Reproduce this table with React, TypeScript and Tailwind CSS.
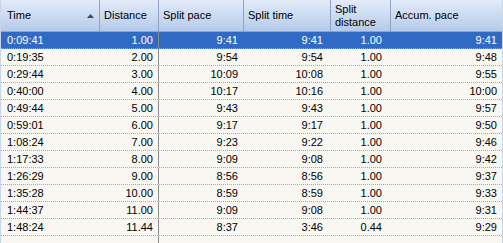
import React from "react";

const rows: string[][] = [
  ["0:09:41", "1.00", "9:41", "9:41", "1.00", "9:41"],
  ["0:19:35", "2.00", "9:54", "9:54", "1.00", "9:48"],
  ["0:29:44", "3.00", "10:09", "10:08", "1.00", "9:55"],
  ["0:40:00", "4.00", "10:17", "10:16", "1.00", "10:00"],
  ["0:49:44", "5.00", "9:43", "9:43", "1.00", "9:57"],
  ["0:59:01", "6.00", "9:17", "9:17", "1.00", "9:50"],
  ["1:08:24", "7.00", "9:23", "9:22", "1.00", "9:46"],
  ["1:17:33", "8.00", "9:09", "9:08", "1.00", "9:42"],
  ["1:26:29", "9.00", "8:56", "8:56", "1.00", "9:37"],
  ["1:35:28", "10.00", "8:59", "8:59", "1.00", "9:33"],
  ["1:44:37", "11.00", "9:09", "9:08", "1.00", "9:31"],
  ["1:48:24", "11.44", "8:37", "3:46", "0.44", "9:29"],
];

const widths = ["w-[99px]", "w-[59px]", "w-[85px]", "w-[87px]", "w-[60px]", "w-[111px]"];

export default function App() {
  return (
    <div
      className="w-[503px] h-[243px] bg-[#f9f7f2] border-x border-[#c9d6ea] overflow-hidden text-[11px] text-black"
      style={{ fontFamily: '"Liberation Sans", Arial, sans-serif' }}
    >
      <div className="flex h-[32px] bg-gradient-to-b from-[#e2ebf8] via-[#ccdbf2] to-[#b5cae9] border-b border-[#8ea3c6]">
        <div className={`${widths[0]} relative flex items-center pl-[6px] border-r border-[#8ea3c6]`}>
          Time
          <svg className="absolute right-[5px] top-[14px]" width="7" height="4" viewBox="0 0 7 4">
            <polygon points="3.5,0 7,4 0,4" fill="#4a4a4a" />
          </svg>
        </div>
        <div className={`${widths[1]} flex items-center pl-[4px] border-r border-[#8ea3c6]`}>Distance</div>
        <div className={`${widths[2]} flex items-center pl-[4px] border-r border-[#8ea3c6]`}>Split pace</div>
        <div className={`${widths[3]} flex items-center pl-[4px] border-r border-[#8ea3c6]`}>Split time</div>
        <div className={`${widths[4]} flex items-center pl-[4px] leading-[13px] border-r border-[#8ea3c6]`}>
          Split
          <br />
          distance
        </div>
        <div className={`${widths[5]} flex items-center pl-[4px]`}>Accum. pace</div>
      </div>
      {rows.map((r, i) => {
        const sel = i === 0;
        return (
          <div
            key={i}
            className={`flex h-[17px] border-b border-dotted border-[#a8a8a8] ${
              sel ? "bg-[#316ac5] text-white" : ""
            }`}
          >
            <div className={`${widths[0]} flex items-center pl-[6px]`}>{r[0]}</div>
            <div className={`${widths[1]} flex items-center justify-end pr-[5px] border-r border-[#8c8c8c]`}>
              {r[1]}
            </div>
            <div className={`${widths[2]} flex items-center justify-end pr-[6px]`}>{r[2]}</div>
            <div className={`${widths[3]} flex items-center justify-end pr-[8px]`}>{r[3]}</div>
            <div className={`${widths[4]} flex items-center justify-end pr-[9px]`}>{r[4]}</div>
            <div className={`${widths[5]} flex items-center justify-end pr-[5px]`}>{r[5]}</div>
          </div>
        );
      })}
      <div className="flex h-full">
        <div className={`${widths[0]}`}></div>
        <div className={`${widths[1]} border-r border-[#8c8c8c]`}></div>
      </div>
    </div>
  );
}
